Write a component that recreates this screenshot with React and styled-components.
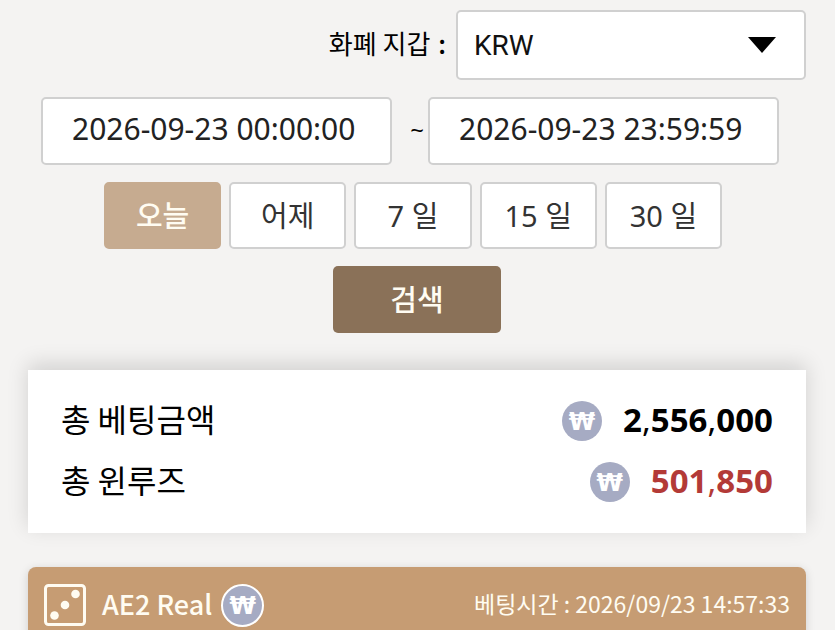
import React, { useState } from "react";
import styled, { createGlobalStyle } from "styled-components";

const GlobalStyle = createGlobalStyle`
  * {
    box-sizing: border-box;
  }
  body {
    margin: 0;
    background: #f4f3f2;
    color: #000;
    font-family: "Noto Sans CJK KR", "Noto Sans", sans-serif;
  }
`;

const latin = `"Noto Sans", "Noto Sans CJK KR", sans-serif`;

const Page = styled.main`
  height: 100vh;
  overflow: hidden;
  padding: 10px 29px 0 28px;
`;

const WalletRow = styled.div`
  display: flex;
  align-items: center;
  justify-content: flex-end;
  gap: 10px;
`;

const WalletLabel = styled.label`
  padding-bottom: 4px;
  font-size: 26px;
  line-height: 40px;
`;

const Colon = styled.span`
  padding-left: 2px;
  font-weight: 500;
`;

const SelectBox = styled.div`
  position: relative;
  width: 45%;
`;

const Select = styled.select`
  display: block;
  width: 100%;
  height: 70px;
  padding: 0 60px 0 16px;
  border: 2px solid #d0d0d0;
  border-radius: 5px;
  background: #fff;
  color: #111;
  appearance: none;
  font-family: Roboto, "Noto Sans CJK KR", sans-serif;
  font-size: 28px;
`;

const Arrow = styled.svg`
  position: absolute;
  top: 27px;
  right: 30px;
  pointer-events: none;
`;

const DateRow = styled.div`
  display: flex;
  align-items: center;
  margin: 17px 27px 0 13px;
`;

const DateInput = styled.input`
  flex: 1;
  min-width: 0;
  height: 68px;
  padding: 0 20px 6px 29px;
  border: 2px solid #d0d0d0;
  border-radius: 5px;
  background: #fff;
  color: #222;
  font-family: ${latin};
  font-size: 30px;
`;

const Tilde = styled.span`
  width: 36px;
  padding: 0 4px 4px 0;
  text-align: right;
  font-family: ${latin};
  font-size: 24px;
`;

const QuickRow = styled.div`
  display: flex;
  gap: 8px;
  margin: 17px 84px 0 76px;
`;

const Button = styled.button`
  display: flex;
  align-items: center;
  justify-content: center;
  height: 67px;
  padding: 0 0 4px;
  border-radius: 5px;
  cursor: pointer;
  font-family: ${latin};
  font-size: 29px;
`;

const QuickButton = styled(Button)`
  flex: 1;
  border: 2px solid ${(props) => (props.$active ? "#c6ab90" : "#d0d0d0")};
  background: ${(props) => (props.$active ? "#c6ab90" : "#fff")};
  color: ${(props) => (props.$active ? "#fffcf2" : "#333")};
  font-weight: ${(props) => (props.$active ? 500 : 400)};
`;

const SearchButton = styled(Button)`
  width: 168px;
  margin: 17px auto 0;
  border: 0;
  background: #8a7158;
  color: #fffcf2;
  font-weight: 500;
`;

const Totals = styled.dl`
  margin: 37px 0 0;
  padding: 20px 33px 21px;
  background: #fff;
  box-shadow: 0 -6px 20px rgba(0, 0, 0, 0.14);
`;

const TotalRow = styled.div`
  display: flex;
  align-items: center;
  justify-content: space-between;
  height: 61px;
`;

const TotalName = styled.dt`
  padding-bottom: 6px;
  font-size: 32px;
`;

const TotalValue = styled.dd`
  display: flex;
  align-items: center;
  gap: 21px;
  margin: 0;
  color: ${(props) => (props.$loss ? "#b33a37" : "#000")};
  font-family: ${latin};
  font-size: 33px;
  font-weight: 700;
`;

const AmountText = styled.span`
  padding-bottom: 3px;
`;

const Comma = styled.span`
  font-weight: 400;
`;

const Badge = styled.span`
  display: flex;
  flex: none;
  align-items: center;
  justify-content: center;
  width: ${(props) => (props.$outlined ? 43 : 40)}px;
  height: ${(props) => (props.$outlined ? 43 : 40)}px;
  padding-top: 2px;
  border: ${(props) => (props.$outlined ? "2px solid #fff" : "0")};
  border-radius: 50%;
  background: #a6abc3;
  color: #fff;
  font-family: "DejaVu Sans", sans-serif;
  font-size: 24px;
  font-weight: 700;
  line-height: 24px;
`;

const BetHeader = styled.header`
  display: flex;
  align-items: center;
  height: 76px;
  margin-top: 34px;
  padding: 0 16px;
  border-radius: 8px 8px 0 0;
  background: #c69c73;
  color: #fffcf2;
  box-shadow: 0 2px 10px rgba(0, 0, 0, 0.15);
`;

const GameName = styled.h2`
  margin: 0 9px 0 16px;
  padding-bottom: 4px;
  font-size: 27px;
  font-weight: 500;
`;

const BetTime = styled.div`
  margin-left: auto;
  padding-bottom: 4px;
  font-size: 23px;
`;

const RANGES = ["오늘", "어제", "7 일", "15 일", "30 일"];

const TOTALS = [
  { name: "총 베팅금액", value: "2,556,000" },
  { name: "총 윈루즈", value: "501,850", loss: true },
];

const Amount = ({ value }) => (
  <AmountText>
    {value.split(",").map((part, i) => (
      <React.Fragment key={i}>
        {i > 0 && <Comma>,</Comma>}
        {part}
      </React.Fragment>
    ))}
  </AmountText>
);

const DiceIcon = () => (
  <svg width="42" height="42" viewBox="0 0 42 42" aria-hidden="true">
    <rect x="1.5" y="1.5" width="39" height="39" rx="3" fill="none" stroke="#fffcf2" strokeWidth="3" />
    <circle cx="10.5" cy="31.5" r="4.3" fill="#fffcf2" />
    <circle cx="21" cy="21" r="4.3" fill="#fffcf2" />
    <circle cx="31.5" cy="10" r="4.3" fill="#fffcf2" />
  </svg>
);

const App = () => {
  const [range, setRange] = useState("오늘");

  return (
    <>
      <GlobalStyle />
      <Page>
        <WalletRow>
          <WalletLabel htmlFor="wallet">
            화폐 지갑 <Colon>:</Colon>
          </WalletLabel>
          <SelectBox>
            <Select id="wallet" defaultValue="KRW">
              <option value="KRW">KRW</option>
            </Select>
            <Arrow width="28" height="16" viewBox="0 0 28 16" aria-hidden="true">
              <path d="M0 0h28L14 16z" />
            </Arrow>
          </SelectBox>
        </WalletRow>
        <DateRow>
          <DateInput type="text" aria-label="시작일" defaultValue="2026-09-23 00:00:00" />
          <Tilde>~</Tilde>
          <DateInput type="text" aria-label="종료일" defaultValue="2026-09-23 23:59:59" />
        </DateRow>
        <QuickRow>
          {RANGES.map((name) => (
            <QuickButton key={name} type="button" $active={range === name} onClick={() => setRange(name)}>
              {name}
            </QuickButton>
          ))}
        </QuickRow>
        <SearchButton type="button">검색</SearchButton>
        <Totals>
          {TOTALS.map((total) => (
            <TotalRow key={total.name}>
              <TotalName>{total.name}</TotalName>
              <TotalValue $loss={total.loss}>
                <Badge>₩</Badge>
                <Amount value={total.value} />
              </TotalValue>
            </TotalRow>
          ))}
        </Totals>
        <BetHeader>
          <DiceIcon />
          <GameName>AE2 Real</GameName>
          <Badge $outlined>₩</Badge>
          <BetTime>베팅시간 : 2026/09/23 14:57:33</BetTime>
        </BetHeader>
      </Page>
    </>
  );
};

export default App;
